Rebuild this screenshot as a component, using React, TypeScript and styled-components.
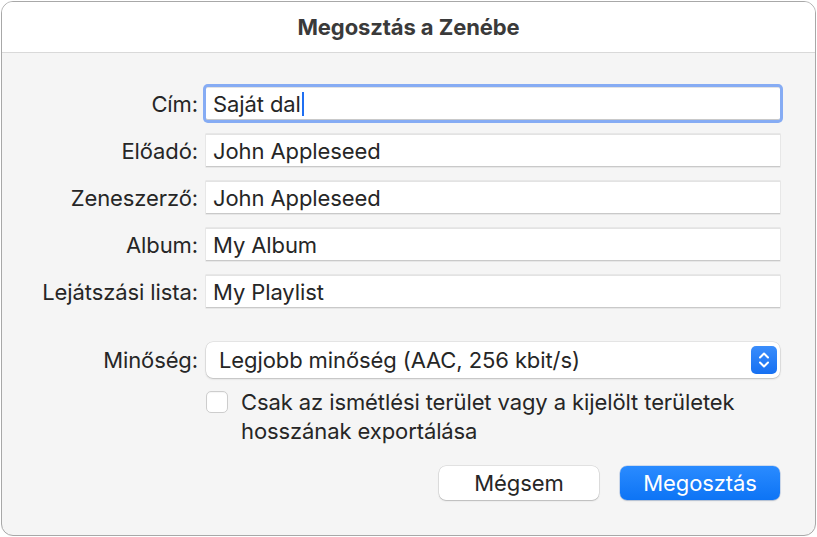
import React from 'react'
import styled, { createGlobalStyle } from 'styled-components'

const GlobalStyle = createGlobalStyle`
  html, body {
    margin: 0;
    padding: 0;
    background: #ffffff;
  }
  body {
    font-family: Inter, "Noto Sans", "Liberation Sans", sans-serif;
    color: #262626;
  }
`

type Field = {
  label: string
  value: string
  focused?: boolean
}

const fields: Field[] = [
  { label: 'Cím:', value: 'Saját dal', focused: true },
  { label: 'Előadó:', value: 'John Appleseed' },
  { label: 'Zeneszerző:', value: 'John Appleseed' },
  { label: 'Album:', value: 'My Album' },
  { label: 'Lejátszási lista:', value: 'My Playlist' },
]

export default function App() {
  return (
    <>
      <GlobalStyle />
      <Window>
        <TitleBar>Megosztás a Zenébe</TitleBar>
        <Body>
          <FormGrid>
            {fields.map(f => (
              <React.Fragment key={f.label}>
                <Label>{f.label}</Label>
                <TextField focused={f.focused}>
                  {f.value}
                  {f.focused && <Caret />}
                </TextField>
              </React.Fragment>
            ))}
          </FormGrid>

          <QualityGrid>
            <Label>Minőség:</Label>
            <Popup>
              <span>Legjobb minőség (AAC, 256 kbit/s)</span>
              <Stepper>
                <svg width="14" height="22" viewBox="0 0 14 22" fill="none">
                  <path d="M3 8.5 L7 4.5 L11 8.5" stroke="#fff" strokeWidth="2" strokeLinecap="round" strokeLinejoin="round" />
                  <path d="M3 13.5 L7 17.5 L11 13.5" stroke="#fff" strokeWidth="2" strokeLinecap="round" strokeLinejoin="round" />
                </svg>
              </Stepper>
            </Popup>
            <span />
            <CheckRow>
              <CheckBox />
              <CheckText>
                Csak az ismétlési terület vagy a kijelölt területek
                <br />
                hosszának exportálása
              </CheckText>
            </CheckRow>
          </QualityGrid>

          <ButtonRow>
            <Button>Mégsem</Button>
            <Button primary>Megosztás</Button>
          </ButtonRow>
        </Body>
      </Window>
    </>
  )
}

const Window = styled.div`
  box-sizing: border-box;
  width: 815px;
  height: 535px;
  margin: 1px;
  border: 1px solid #a8a8a8;
  border-radius: 12px;
  overflow: hidden;
  background: #f5f5f5;
  display: flex;
  flex-direction: column;
`

const TitleBar = styled.div`
  height: 50px;
  flex: none;
  background: #ffffff;
  border-bottom: 1px solid #d9d9d9;
  display: flex;
  align-items: center;
  justify-content: center;
  font-size: 22px;
  font-weight: 700;
  letter-spacing: -0.1px;
  color: #3a3a3a;
`

const Body = styled.div`
  padding: 34px 35px 0 0;
  display: flex;
  flex-direction: column;
`

const FormGrid = styled.div`
  display: grid;
  grid-template-columns: 196px 1fr;
  column-gap: 8px;
  row-gap: 14px;
  align-items: center;
`

const Label = styled.div`
  text-align: right;
  font-size: 22px;
  letter-spacing: -0.1px;
  color: #262626;
  white-space: nowrap;
`

const TextField = styled.div<{ focused?: boolean }>`
  box-sizing: border-box;
  height: 33px;
  background: #ffffff;
  padding: 0 7px;
  display: flex;
  align-items: center;
  font-size: 22px;
  letter-spacing: -0.1px;
  color: #262626;
  border-top: 1px solid #e3e3e3;
  border-bottom: 1px solid #c9c9c9;
  box-shadow: ${p => (p.focused ? '0 0 0 3px #86acf4' : '0 0 0 0.5px #dadada')};
  border-radius: ${p => (p.focused ? '2px' : '0')};
`

const Caret = styled.span`
  display: inline-block;
  width: 2px;
  height: 24px;
  margin-left: 1px;
  background: #1f6ff2;
`

const QualityGrid = styled.div`
  margin-top: 34px;
  display: grid;
  grid-template-columns: 196px 1fr;
  column-gap: 8px;
  row-gap: 10px;
  align-items: center;
`

const Popup = styled.div`
  box-sizing: border-box;
  height: 36px;
  background: #ffffff;
  border-radius: 7px;
  box-shadow: 0 0 0 0.5px rgba(0, 0, 0, 0.12), 0 1px 2px rgba(0, 0, 0, 0.18);
  display: flex;
  align-items: center;
  justify-content: space-between;
  padding: 0 3px 0 13px;
  font-size: 22px;
  letter-spacing: -0.1px;
  color: #262626;
`

const Stepper = styled.div`
  width: 26px;
  height: 28px;
  border-radius: 5px;
  background: linear-gradient(#3a8dfb, #1670f2);
  display: flex;
  align-items: center;
  justify-content: center;
`

const CheckRow = styled.div`
  display: flex;
  align-items: flex-start;
  gap: 13px;
`

const CheckBox = styled.div`
  box-sizing: border-box;
  flex: none;
  width: 22px;
  height: 22px;
  margin-top: 3px;
  border-radius: 5px;
  background: #ffffff;
  border: 1px solid #cdcdcd;
  box-shadow: inset 0 1px 1px rgba(0, 0, 0, 0.04);
`

const CheckText = styled.div`
  font-size: 22px;
  letter-spacing: -0.1px;
  line-height: 29px;
  color: #262626;
`

const ButtonRow = styled.div`
  margin-top: 20px;
  display: flex;
  justify-content: flex-end;
  gap: 21px;
`

const Button = styled.div<{ primary?: boolean }>`
  box-sizing: border-box;
  width: 160px;
  height: 34px;
  border-radius: 7px;
  display: flex;
  align-items: center;
  justify-content: center;
  font-size: 22px;
  letter-spacing: -0.1px;
  color: ${p => (p.primary ? '#ffffff' : '#262626')};
  background: ${p => (p.primary ? 'linear-gradient(#2a8bff, #0d74f5)' : '#ffffff')};
  box-shadow: ${p =>
    p.primary
      ? '0 0 0 0.5px rgba(0, 80, 200, 0.3), 0 1px 1.5px rgba(0, 0, 0, 0.15)'
      : '0 0 0 0.5px rgba(0, 0, 0, 0.15), 0 1px 1.5px rgba(0, 0, 0, 0.18)'};
`
